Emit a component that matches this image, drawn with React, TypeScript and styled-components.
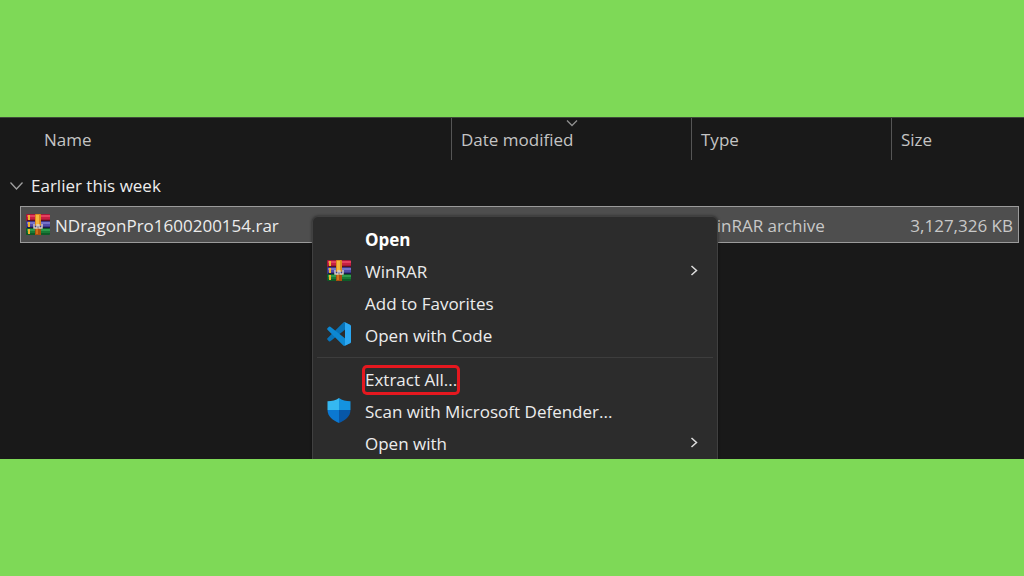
import React from "react";
import styled, { createGlobalStyle } from "styled-components";

const GlobalStyle = createGlobalStyle`
  *, *::before, *::after { box-sizing: border-box; }
  body {
    margin: 0;
    background: #7ed957;
    font-family: "Open Sans", "Noto Sans", sans-serif;
    font-size: 17px;
    line-height: 24px;
    color: #e6e6e6;
  }
`;

const Page = styled.main`
  min-height: 100vh;
  display: flex;
  flex-direction: column;
  justify-content: center;
`;

const Explorer = styled.section`
  position: relative;
  min-height: 342px;
  overflow: hidden;
  background: #191919;
  border-top: 1px solid #3f4a3a;
`;

const FileTable = styled.table`
  width: 100%;
  table-layout: fixed;
  border-collapse: separate;
  border-spacing: 0;
`;

const Column = styled.col<{ $width?: number }>`
  width: ${({ $width }) => ($width ? `${$width}px` : "auto")};
`;

const HeaderCell = styled.th<{ $divided?: boolean }>`
  position: relative;
  height: 42px;
  padding: 2px 0 0 ${({ $divided }) => ($divided ? 9 : 24)}px;
  border-left: ${({ $divided }) => ($divided ? "1px solid #555555" : "none")};
  color: #c4c4c4;
  font-weight: 400;
  text-align: left;
`;

const Gutter = styled.td`
  padding: 0;
`;

const SortMark = styled.svg`
  position: absolute;
  top: 1px;
  left: 50%;
  width: 12px;
  height: 8px;
  margin-left: -6px;
`;

const GroupCell = styled.th`
  height: 46px;
  padding: 5px 0 0 10px;
  font-weight: 400;
  text-align: left;
`;

const GroupToggle = styled.button`
  display: flex;
  align-items: center;
  gap: 8px;
  padding: 0;
  border: 0;
  background: none;
  color: #ececec;
  font: inherit;
`;

const FileCell = styled.td<{ $edge?: "start" | "end" }>`
  height: 37px;
  padding: ${({ $edge }) => ($edge === "end" ? "3px 5px 0 0" : $edge === "start" ? "3px 0 0 5px" : "3px 0 0 10px")};
  border: 0 solid #9b9b9b;
  border-top-width: 1px;
  border-bottom-width: 1px;
  border-left-width: ${({ $edge }) => ($edge === "start" ? 1 : 0)}px;
  border-right-width: ${({ $edge }) => ($edge === "end" ? 1 : 0)}px;
  background: #4e4e4e;
  color: #c8c8c8;
  text-align: ${({ $edge }) => ($edge === "end" ? "right" : "left")};
  white-space: nowrap;
`;

const FileName = styled.span`
  display: flex;
  align-items: center;
  gap: 5px;
  color: #ececec;
`;

const Menu = styled.div`
  position: absolute;
  top: 98px;
  left: 312px;
  width: 406px;
  padding: 7px 4px;
  border: 1px solid #404040;
  border-radius: 6px;
  background: #2c2c2c;
  box-shadow: 0 0 3px rgba(0, 0, 0, 0.5);
`;

const MenuItem = styled.button<{ $strong?: boolean }>`
  display: grid;
  grid-template-columns: 25px 1fr 8px;
  column-gap: 14px;
  align-items: center;
  width: 100%;
  height: 32px;
  padding: 0 15px 0 9px;
  border: 0;
  background: none;
  color: ${({ $strong }) => ($strong ? "#ffffff" : "#ececec")};
  font: inherit;
  font-weight: ${({ $strong }) => ($strong ? 700 : 400)};
  text-align: left;
  white-space: nowrap;
`;

const IconSlot = styled.span`
  display: flex;
  align-items: center;
  justify-content: center;
  padding-bottom: 4px;
`;

const Divider = styled.hr`
  height: 1px;
  margin: 5px 0 6px;
  border: 0;
  background: #3d3d3d;
`;

const Highlight = styled.span`
  display: inline-block;
  border-radius: 2px;
  box-shadow: 0 0 0 3px #e5181f;
`;

const WinRarIcon = () => (
  <svg width="24" height="21" viewBox="0 0 24 21" aria-hidden="true">
    <rect x="0" y="0" width="24" height="7" rx="1" fill="#a51838" />
    <rect x="1" y="1" width="23" height="2" fill="#e2405f" />
    <rect x="1" y="3" width="23" height="2" fill="#c61f42" />
    <rect x="1" y="6" width="23" height="1" fill="#5a1020" />
    <rect x="0" y="7" width="24" height="7" rx="1" fill="#3b3787" />
    <rect x="1" y="8" width="23" height="2" fill="#7672c8" />
    <rect x="1" y="10" width="23" height="2" fill="#504ca8" />
    <rect x="1" y="13" width="23" height="1" fill="#1d1a48" />
    <rect x="0" y="14" width="24" height="7" rx="1" fill="#0f5b28" />
    <rect x="1" y="15" width="23" height="2" fill="#2f9a4c" />
    <rect x="1" y="17" width="23" height="2" fill="#187a36" />
    <path d="M3 1v5M3 8v5M3 15v5" stroke="#eeb02c" strokeWidth="2" />
    <rect x="9" y="0" width="6" height="12" rx="1" fill="#dc8a1e" />
    <rect x="10" y="1" width="3" height="10" fill="#f4b83e" />
    <rect x="9" y="14" width="6" height="7" fill="#a9500f" />
    <rect x="10" y="14" width="2" height="6" fill="#cf6f1c" />
    <path d="M8 10v4h3v-3h2v3h3v-4" fill="none" stroke="#d6d1ca" strokeWidth="1.400" />
  </svg>
);

const CodeIcon = () => (
  <svg width="24" height="24" viewBox="0 0 100 100" aria-hidden="true">
    <path d="M78 4 96 12 72 34 14 80q-3 2-6 0l-6-6q-3-3 0-6L68 2q4-3 10 2Z" fill="#0873b8" />
    <path d="M78 96 96 88 72 66 14 20q-3-2-6 0l-6 6q-3 3 0 6L68 98q4 3 10-2Z" fill="#0d88d2" />
    <path d="M75 99c-2 1-5 .6-7-1 2 2 7 1 7-3V5c0-4-5-5-7-3 2-1.600 5-2 7-1l21 10c2 1 4 3 4 6v66c0 3-2 5-4 6Z" fill="#2ba7f2" />
  </svg>
);

const DefenderIcon = () => (
  <svg width="24" height="25" viewBox="0 0 23 25" aria-hidden="true">
    <path d="M11.500 0C8.500 2.500 4.500 3.200 0 3.200V12h11.500Z" fill="#35b8f1" />
    <path d="M11.500 0c3 2.500 7 3.200 11.500 3.200V12H11.500Z" fill="#1493df" />
    <path d="M0 12c0 6.500 5.500 10.500 11.500 13V12Z" fill="#0b78d1" />
    <path d="M23 12c0 6.500-5.500 10.500-11.500 13V12Z" fill="#0757a8" />
  </svg>
);

const SubmenuArrow = () => (
  <svg width="8" height="14" viewBox="0 0 8 14" aria-hidden="true">
    <path d="M1.500 1 6.500 5.500l-5 4.500" fill="none" stroke="#dedede" strokeWidth="1.500" />
  </svg>
);

type Entry = {
  label: string;
  icon?: React.ReactNode;
  strong?: boolean;
  submenu?: boolean;
  marked?: boolean;
};

const openEntries: Entry[] = [
  { label: "Open", strong: true },
  { label: "WinRAR", icon: <WinRarIcon />, submenu: true },
  { label: "Add to Favorites" },
  { label: "Open with Code", icon: <CodeIcon /> },
];

const toolEntries: Entry[] = [
  { label: "Extract All...", marked: true },
  { label: "Scan with Microsoft Defender...", icon: <DefenderIcon /> },
  { label: "Open with", submenu: true },
];

const renderEntry = ({ label, icon, strong, submenu, marked }: Entry) => (
  <MenuItem key={label} type="button" role="menuitem" $strong={strong} aria-haspopup={submenu ? "menu" : undefined}>
    <IconSlot>{icon}</IconSlot>
    <span>{marked ? <Highlight>{label}</Highlight> : label}</span>
    {submenu && <SubmenuArrow />}
  </MenuItem>
);

export default function App() {
  return (
    <>
      <GlobalStyle />
      <Page>
        <Explorer aria-label="Files">
          <FileTable>
            <colgroup>
              <Column $width={20} />
              <Column />
              <Column $width={240} />
              <Column $width={200} />
              <Column $width={128} />
              <Column $width={5} />
            </colgroup>
            <thead>
              <tr>
                <Gutter />
                <HeaderCell scope="col">Name</HeaderCell>
                <HeaderCell scope="col" $divided aria-sort="descending">
                  Date modified
                  <SortMark viewBox="0 0 12 8" aria-hidden="true">
                    <path d="M1 1.500 6 6.500l5-5" fill="none" stroke="#8f8f8f" strokeWidth="1.300" />
                  </SortMark>
                </HeaderCell>
                <HeaderCell scope="col" $divided>Type</HeaderCell>
                <HeaderCell scope="col" $divided>Size</HeaderCell>
                <Gutter />
              </tr>
            </thead>
            <tbody>
              <tr>
                <GroupCell colSpan={6} scope="colgroup">
                  <GroupToggle type="button" aria-expanded="true">
                    <svg width="13" height="8" viewBox="0 0 13 8" aria-hidden="true">
                      <path d="M.5.500 6.500 7l6-6.500" fill="none" stroke="#a0a0a0" strokeWidth="1.300" />
                    </svg>
                    Earlier this week
                  </GroupToggle>
                </GroupCell>
              </tr>
              <tr>
                <Gutter />
                <FileCell $edge="start">
                  <FileName>
                    <IconSlot><WinRarIcon /></IconSlot>
                    NDragonPro1600200154.rar
                  </FileName>
                </FileCell>
                <FileCell />
                <FileCell>WinRAR archive</FileCell>
                <FileCell $edge="end">3,127,326 KB</FileCell>
                <Gutter />
              </tr>
            </tbody>
          </FileTable>
          <Menu role="menu" aria-label="File actions">
            {openEntries.map(renderEntry)}
            <Divider />
            {toolEntries.map(renderEntry)}
          </Menu>
        </Explorer>
      </Page>
    </>
  );
}
